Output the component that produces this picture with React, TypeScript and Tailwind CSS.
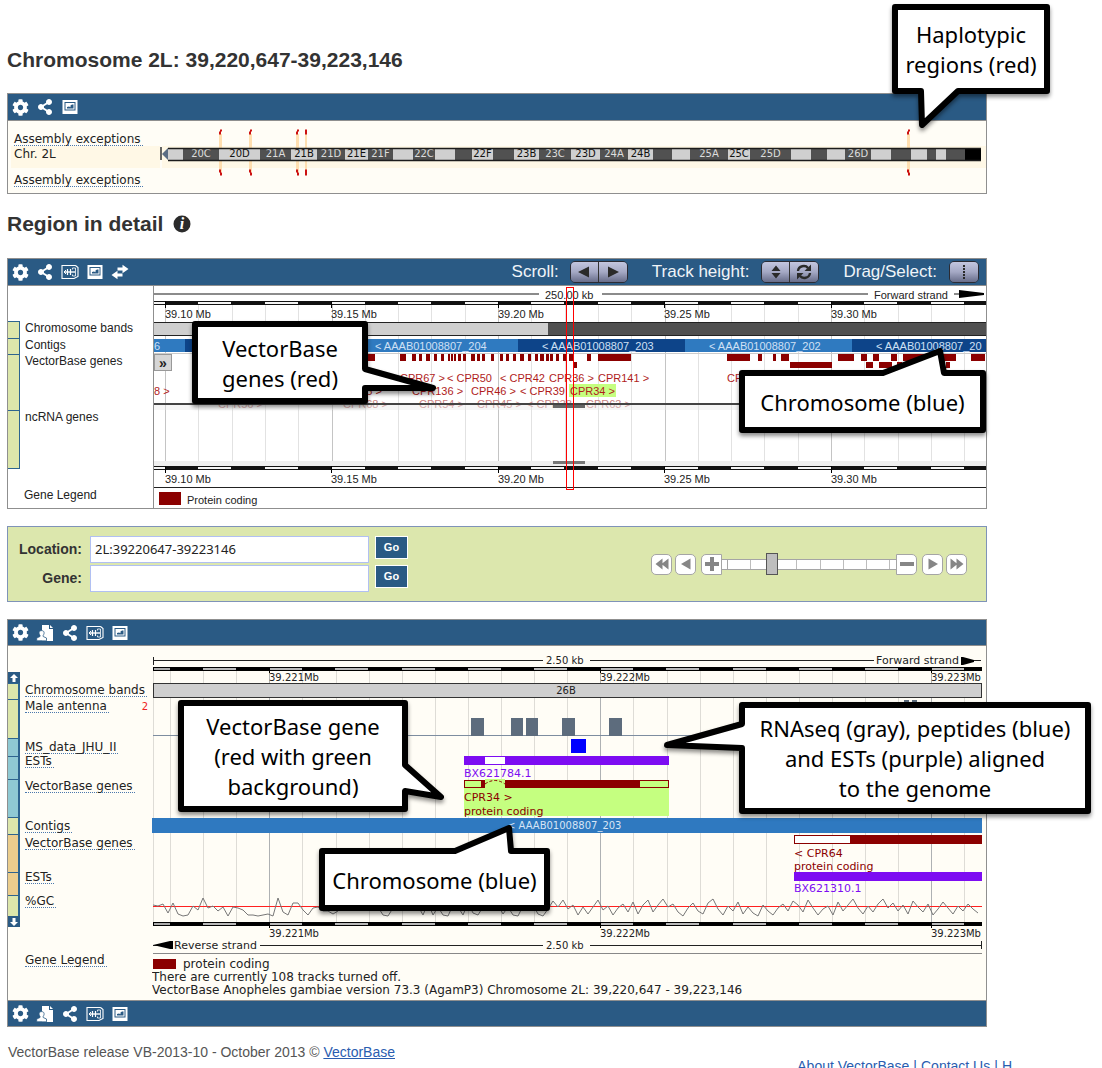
import React from "react";
import { FaCog, FaShareAlt } from "react-icons/fa";

const BLUE = "#2a5a84";
const RED = "#8b0000";
const SANS = '"Liberation Sans", Arial, sans-serif';
const DEJAVU = '"DejaVu Sans", Verdana, sans-serif';

/* ---------- toolbar icons ---------- */

function ImageIcon() {
  return (
    <svg viewBox="0 0 16 16" className="size-4">
      <rect x="0.5" y="1" width="15" height="14" fill="#fff" />
      <rect x="3" y="3.5" width="10" height="7.5" fill="none" stroke={BLUE} strokeWidth="1" />
      <path d="M5 9.500V8L7 7.500L8.500 8.200V6.500L10 5.500H11.500V9.500Z" fill={BLUE} />
    </svg>
  );
}

function ResizeIcon() {
  return (
    <svg viewBox="0 0 18 16" className="h-4 w-[18px]" fill="none" stroke="#fff">
      <path d="M14.5 1.500H1V14.500H13L17 12.500V3.500L14.500 1.500" strokeWidth="1.100" />
      <path d="M3 8H14" strokeWidth="1.400" />
      <path d="M6.500 5V11M9.500 5V11" strokeWidth="1.200" />
      <path d="M5 6L3 8L5 10" strokeWidth="1" />
      <path d="M11.500 5.500V4H14.500V12H11.500V10.500" strokeWidth="0.800" />
    </svg>
  );
}

function UserPageIcon() {
  return (
    <svg viewBox="0 0 18 18" className="size-[18px]">
      <path d="M6 1H13V5H17V17H6Z" fill="#fff" />
      <path d="M14 1L17 4H14Z" fill="#fff" />
      <path
        d="M0.7 16.8V14L4 12.5V11.2C2.6 9.8 2.6 6.6 5.6 6.6C8.6 6.6 8.6 9.8 7.2 11.2V12.5L10.5 14V16.8Z"
        fill="#fff"
        stroke={BLUE}
        strokeWidth="0.8"
      />
    </svg>
  );
}

function SwapIcon() {
  return (
    <svg viewBox="0 0 18 16" className="h-4 w-[18px]" fill="#fff">
      <path d="M17.5 5L11.5 0.8V3.4H6.5V6.6H11.5V9.2Z" />
      <path d="M0.5 11L6.5 6.8V9.4H11.5V12.6H6.5V15.2Z" />
    </svg>
  );
}

const TOOLS: Record<string, { label: string; icon: React.ReactNode }> = {
  gear: { label: "Configure", icon: <FaCog className="size-[17px]" /> },
  user: { label: "Your data", icon: <UserPageIcon /> },
  share: { label: "Share", icon: <FaShareAlt className="size-4" /> },
  resize: { label: "Resize image", icon: <ResizeIcon /> },
  image: { label: "Export image", icon: <ImageIcon /> },
  swap: { label: "Reset configuration", icon: <SwapIcon /> },
};

function Tools({ items }: { items: string[] }) {
  return (
    <div className="flex gap-[5px]">
      {items.map((k) => (
        <button key={k} aria-label={TOOLS[k].label} className="flex size-5 items-center justify-center text-white">
          {TOOLS[k].icon}
        </button>
      ))}
    </div>
  );
}

/* ---------- callouts ---------- */

function Callout({ box, path, lines }: { box: string; path: string; lines: string[] }) {
  return (
    <div className={"absolute " + box}>
      <svg className="absolute inset-0 size-full overflow-visible drop-shadow-[0_3px_2px_rgba(0,0,0,0.45)]">
        <path d={path} fill="#fff" stroke="#000" strokeWidth="6" strokeLinejoin="round" />
      </svg>
      <p className="relative flex h-full flex-col items-center justify-center whitespace-nowrap font-['Noto_Sans'] text-[22px] leading-[30px] text-black">
        {lines.map((l) => (
          <span key={l}>{l}</span>
        ))}
      </p>
    </div>
  );
}

/* ---------- overview chart ---------- */

type Band = [number, number, string?];
const LIGHT: Band[] = [
  [168, 183], [219, 260, "20D"], [291, 317, "21B"], [345, 368, "21E"], [393, 413], [435, 455],
  [472, 493, "22F"], [514, 539, "23B"], [571, 600, "23D"], [628, 653, "24B"], [672, 690],
  [728, 750, "25C"], [791, 811], [827, 845], [871, 891], [911, 927], [936, 946],
];
const DARK: Band[] = [
  [183, 219, "20C"], [260, 291, "21A"], [317, 345, "21D"], [368, 393, "21F"], [413, 435, "22C"],
  [455, 472], [493, 514], [539, 571, "23C"], [600, 628, "24A"], [653, 672], [690, 728, "25A"],
  [750, 791, "25D"], [811, 827], [845, 871, "26D"], [891, 911], [927, 936], [946, 965],
];
const EXCEPTIONS: [number, number][] = [[219, 3], [249, 3], [296, 3], [305, 2], [907, 3]];

function Bands({ bands, fill, ink }: { bands: Band[]; fill: string; ink: string }) {
  return (
    <>
      {bands.map(([a, b, t]) => (
        <g key={a}>
          <rect x={a} y={149} width={b - a} height={11} fill={fill} />
          {t && (
            <text x={(a + b) / 2} y={157} textAnchor="middle" fontSize="10" fill={ink}>
              {t}
            </text>
          )}
        </g>
      ))}
    </>
  );
}

function OverviewChart() {
  return (
    <svg viewBox="160 121 826 72" className="h-auto w-full" fontFamily={DEJAVU}>
      <rect x="162" y="146" width="824" height="22" fill="#fff8e6" />
      {EXCEPTIONS.map(([x, w]) => (
        <rect key={x} x={x} y="134" width={w} height="38" fill="#ffdfb0" />
      ))}
      <path d="M161 147V160" stroke="#333" strokeWidth="1.5" />
      <path d="M162 154L168 148V160Z" fill="#5b6d84" />
      <Bands bands={LIGHT} fill="#d0d0d0" ink="#111" />
      <Bands bands={DARK} fill="#515151" ink="#ddd" />
      <rect x="965" y="148" width="16" height="13" fill="#000" />
      <path d="M168 148.5H981M168 160.5H981" stroke="#1c1c1c" strokeWidth="1.5" />
      {EXCEPTIONS.map(([x, w]) => (
        <path
          key={x}
          d={`M${x} 131.5h2v3h-2zM${x + w - 2} 129.5h2v2h-2zM${x} 169.5h2v3h-2zM${x + w - 2} 172.5h2v3h-2z`}
          fill="#cc1111"
        />
      ))}
    </svg>
  );
}

/* ---------- region chart ---------- */

const GENES_ROW_1: [number, number][] = [
  [366, 9], [400, 6], [412, 4], [419, 3], [426, 4], [434, 3], [441, 3], [448, 2], [451, 2], [454, 2],
  [458, 3], [463, 3], [471, 4], [477, 3], [482, 3], [491, 3], [500, 3], [506, 3], [513, 3], [520, 4],
  [528, 3], [535, 3], [540, 4], [546, 3], [550, 3], [556, 3], [563, 3], [569, 4], [587, 4], [598, 33],
  [727, 23], [758, 4], [773, 3], [781, 8], [838, 16], [861, 6], [873, 6], [891, 6], [903, 53], [971, 14],
];
const GENES_ROW_2: [number, number][] = [[573, 4], [790, 42], [866, 7], [879, 13], [897, 5], [946, 4]];
const GENE_LABELS: [number, number, string][] = [
  [400, 382, "CPR67 >"], [447, 382, "< CPR50"], [500, 382, "< CPR42"], [549, 382, "CPR36 >"],
  [598, 382, "CPR141 >"], [727, 382, "CPR66 >"], [154, 395, "8 >"], [337, 395, "CPR65 >"],
  [412, 395, "CPR136 >"], [471, 395, "CPR46 >"], [520, 395, "< CPR39"], [570, 395, "CPR34 >"],
];
const FADED_LABELS: [number, string][] = [
  [218, "CPR56 >"], [343, "CPR68 >"], [419, "CPR54 >"], [477, "CPR45 >"], [527, "< CPR38"], [586, "CPR63 >"],
];
const MB: [number, string][] = [
  [165, "39.10 Mb"], [331, "39.15 Mb"], [498, "39.20 Mb"], [664, "39.25 Mb"], [831, "39.30 Mb"],
];
const range = (n: number) => Array.from({ length: n }, (_, i) => i);

function RegionRuler({ y, textY }: { y: number; textY: number }) {
  return (
    <g>
      <rect x="154" y={y} width="832" height="4" fill="#111" />
      {range(13).map((k) => (
        <rect key={k} x={Math.round(165 - 33.3 + 66.6 * k)} y={y + 1} width="33" height="2" fill="#f4f4f4" />
      ))}
      {MB.map(([x, t]) => (
        <g key={x}>
          <rect x={x} y={y} width="1" height="7" fill="#000" />
          <text x={x} y={textY} fontSize="11" fill="#222">
            {t}
          </text>
        </g>
      ))}
    </g>
  );
}

function RegionChart() {
  return (
    <svg viewBox="154 286 832 222" className="h-auto w-full" fontFamily={SANS}>
      {range(25).map((k) => (
        <rect
          key={k}
          x={Math.round(165 + 33.3 * k)}
          y="305"
          width="1"
          height="161"
          fill={k % 5 === 0 ? "#c4c4c4" : "#e2e2e2"}
        />
      ))}
      <path d="M154 294H539M602 294H868M954 294H962" stroke="#666" strokeWidth="1.5" />
      <path d="M959 290L984 293V295L959 298Z" fill="#000" />
      <text x="545" y="299" fontSize="11" fill="#222">250.00 kb</text>
      <text x="874" y="299" fontSize="11" fill="#222">Forward strand</text>
      <RegionRuler y={301} textY={318} />

      <rect x="154" y="322" width="394" height="14" fill="#cfcfcf" />
      <rect x="548" y="322" width="438" height="14" fill="#505050" />
      <path d="M154 322.5H986M154 335.5H986" stroke="#222" />

      <rect x="154" y="339" width="832" height="13" fill="#2f7ac0" />
      <rect x="185" y="339" width="166" height="13" fill="#0d4489" />
      <rect x="518" y="339" width="167" height="13" fill="#0d4489" />
      <rect x="852" y="339" width="134" height="13" fill="#0d4489" />
      <rect x="154" y="353" width="832" height="1" fill="#ccc" />
      <g fontSize="11" fill="#cfe0f5">
        <text x="154" y="350">6</text>
        <text x="375" y="350">&lt; AAAB01008807_204</text>
        <text x="542" y="350">&lt; AAAB01008807_203</text>
        <text x="709" y="350">&lt; AAAB01008807_202</text>
        <text x="876" y="350">&lt; AAAB01008807_20</text>
      </g>

      {GENES_ROW_1.map(([x, w]) => (
        <rect key={x} x={x} y="354" width={w} height="7" fill={RED} />
      ))}
      {GENES_ROW_2.map(([x, w]) => (
        <rect key={x} x={x} y="362" width={w} height="6" fill={RED} />
      ))}
      <rect x="569" y="384" width="47" height="13" fill="#c5ff80" />
      <g fontSize="11" fill="#b01c1c">
        {GENE_LABELS.map(([x, y, t]) => (
          <text key={t} x={x} y={y}>{t}</text>
        ))}
      </g>
      <g fontSize="11" fill="#c77f7f">
        {FADED_LABELS.map(([x, t]) => (
          <text key={t} x={x} y="408">{t}</text>
        ))}
      </g>
      <rect x="154" y="405" width="832" height="5" fill="#e8e8e8" fillOpacity="0.4" />
      <rect x="154" y="403" width="832" height="2" fill="#444" />
      <rect x="553" y="405" width="32" height="3" fill="#666" />
      <rect x="154" y="461" width="832" height="5" fill="#eeeeee" />
      <rect x="553" y="461" width="32" height="3" fill="#777" />
      <RegionRuler y={466} textY={483} />
      <rect x="154" y="487" width="832" height="1" fill="#222" />
      <rect x="159" y="492" width="22" height="13" fill={RED} />
      <text x="187" y="504" fontSize="11" fill="#222">Protein coding</text>
      <rect x="566.5" y="287.5" width="7" height="202" fill="none" stroke="#f00" />
    </svg>
  );
}

/* ---------- detail chart ---------- */

const KB: [number, string][] = [[269, "39.221Mb"], [600, "39.222Mb"], [931, "39.223Mb"]];

const GC = [
  905, 906, 904, 913, 903, 914, 916, 915, 906, 910, 898, 908, 906, 911, 907, 916, 907, 908, 910, 915, 915, 916, 915, 914,
  916, 898, 912, 915, 903, 903, 910, 915, 908, 907, 911, 911, 914, 911, 906, 911, 900, 909, 898, 902, 908, 907, 915, 916,
  908, 902, 903, 909, 899, 906, 915, 903, 915, 907, 915, 916, 905, 907, 915, 903, 913, 915, 907, 899, 910, 905, 914, 907,
  915, 916, 906, 911, 905, 914, 916, 909, 901, 907, 900, 909, 905, 915, 907, 914, 907, 900, 910, 906, 915, 908, 904, 912,
  902, 914, 905, 900, 912, 905, 899, 907, 904, 912, 916, 908, 903, 911, 914, 903, 899, 909, 915, 906, 911, 902, 914, 907,
  913, 916, 905, 911, 915, 908, 904, 911, 901, 905, 912, 900, 908, 915, 909, 906, 915, 902, 911, 905, 899, 908, 914, 906,
  912, 904, 899, 908, 903, 911, 905, 914, 901, 907, 912, 904, 915, 909, 902, 908, 914, 906, 911, 904, 909, 913,
];
const GC_POINTS = GC.map((y, i) => `${153 + i * 5},${y}`).join(" ");

function DetailRuler({ y, textY }: { y: number; textY: number }) {
  return (
    <g>
      <rect x="153" y={y} width="829" height="4" fill="#000" />
      <rect x="154" y={y + 1} width="16" height="2" fill="#aaa" />
      {range(12).map((k) => (
        <rect key={k} x={Math.round(203 + 66.2 * k)} y={y + 1} width="33" height="2" fill="#b9b9b9" />
      ))}
      {KB.map(([x, t]) => (
        <g key={x}>
          <rect x={x} y={y} width="1" height="6" fill="#000" />
          <text x={x} y={textY} fontSize="10" fill="#222">{t}</text>
        </g>
      ))}
    </g>
  );
}

function DetailChart() {
  return (
    <svg viewBox="152 646 834 354" className="h-auto w-full" fontFamily={DEJAVU}>
      <rect x="153" y="671" width="1" height="251" fill="#dedcd6" />
      {range(25).map((k) => (
        <rect
          key={k}
          x={Math.round(170 + 33.1 * k)}
          y="671"
          width="1"
          height="251"
          fill={k % 10 === 3 ? "#aeb1b3" : "#dedcd6"}
        />
      ))}
      <path d="M153.5 657V665M153 660.5H543M590 660.5H874M961 660.5H981" stroke="#222" strokeWidth="1" />
      <path d="M961 657H963L974 660V662L963 665H961Z" fill="#000" />
      <text x="546" y="664" fontSize="10" fill="#222">2.50 kb</text>
      <text x="876" y="664" fontSize="11" fill="#222">Forward strand</text>
      <DetailRuler y={667} textY={681} />

      <rect x="153.5" y="683.5" width="828" height="14" fill="#cfcfcf" stroke="#333" />
      <text x="566" y="694" fontSize="10" textAnchor="middle" fill="#222">26B</text>

      <rect x="153" y="735" width="829" height="1" fill="#7d8da0" />
      {[[471, 13], [511, 12], [526, 12], [562, 13], [609, 13]].map(([x, w]) => (
        <rect key={x} x={x} y="718" width={w} height="18" fill="#5d6c7d" />
      ))}
      <path d="M904 700h5v3h-5zM912 700h5v3h-5z" fill="#5d6c7d" />
      <rect x="571" y="739" width="15" height="14" fill="#0000ff" />

      <rect x="464" y="756" width="205" height="9" fill="#7d0cf2" />
      <rect x="485" y="757" width="20" height="7" fill="#fff" />
      <text x="464" y="777" fontSize="11" fill="#7d0cf2">BX621784.1</text>

      <rect x="464" y="780" width="205" height="36" fill="#c5ff80" />
      <rect x="464.5" y="780.5" width="204" height="7" fill="none" stroke={RED} />
      <rect x="485" y="779" width="20" height="10" fill="#c5ff80" />
      <path d="M485 784Q495 777 505 784" fill="none" stroke={RED} strokeDasharray="3 2" />
      <rect x="481" y="780" width="4" height="8" fill={RED} />
      <rect x="505" y="780" width="135" height="8" fill={RED} />
      <text x="464" y="801" fontSize="11" fill={RED}>CPR34 &gt;</text>
      <text x="464" y="815" fontSize="11" fill={RED}>protein coding</text>

      <rect x="152" y="818" width="830" height="15" fill="#2f79c0" />
      <text x="507" y="829" fontSize="10" fill="#d6e4f5">&lt; AAAB01008807_203</text>

      <rect x="794.5" y="835.5" width="187" height="8" fill="#fff" stroke={RED} />
      <rect x="850" y="835" width="132" height="9" fill={RED} />
      <text x="794" y="857" fontSize="11" fill={RED}>&lt; CPR64</text>
      <text x="794" y="870" fontSize="11" fill={RED}>protein coding</text>
      <rect x="794" y="872" width="188" height="9" fill="#7d0cf2" />
      <text x="794" y="892" fontSize="11" fill="#7d0cf2">BX621310.1</text>

      <rect x="153" y="906" width="829" height="1" fill="#ff2020" />
      <polyline points={GC_POINTS} fill="none" stroke="#777" strokeWidth="1" />
      <DetailRuler y={922} textY={937} />

      <path d="M153 945.5H160M260 945.5H543M590 945.5H981M981.5 941V949" stroke="#222" />
      <path d="M153 945L170 941H173V949H170Z" fill="#000" />
      <text x="174" y="949" fontSize="11" fill="#222">Reverse strand</text>
      <text x="546" y="949" fontSize="10" fill="#222">2.50 kb</text>
      <rect x="153" y="953" width="829" height="1" fill="#888" />

      <rect x="153" y="959" width="23" height="10" fill={RED} />
      <g fontSize="12" fill="#222">
        <text x="183" y="968">protein coding</text>
        <text x="152" y="981">There are currently 108 tracks turned off.</text>
        <text x="152" y="994">
          VectorBase Anopheles gambiae version 73.3 (AgamP3) Chromosome 2L: 39,220,647 - 39,223,146
        </text>
      </g>
    </svg>
  );
}

/* ---------- track labels ---------- */

const DETAIL_TRACKS = [
  { name: "Chromosome bands", row: "h-4 bg-[#dce6ab]", pad: "pt-0.5" },
  { name: "Male antenna", row: "h-[39px] bg-[#dce6ab]", pad: "pt-0.5", note: "2" },
  { name: "MS_data_JHU_II", row: "h-[18px] bg-[#8fc9d3]", pad: "pt-1" },
  { name: "ESTs", row: "h-[23px] bg-[#8fc9d3]", pad: "pt-0" },
  { name: "VectorBase genes", row: "h-[38px] bg-[#8fc9d3]", pad: "pt-0.5" },
  { name: "Contigs", row: "h-[17px] bg-[#dce6ab]", pad: "pt-1" },
  { name: "VectorBase genes", row: "h-[38px] bg-[#ebcd8d]", pad: "pt-1" },
  { name: "ESTs", row: "h-[23px] bg-[#ebcd8d]", pad: "pt-0" },
  { name: "%GC", row: "h-[21px] bg-[#dce6ab]", pad: "pt-px" },
];

const REGION_TRACKS = [
  { name: "Chromosome bands", row: "h-[17px]" },
  { name: "Contigs", row: "h-4" },
  { name: "VectorBase genes", row: "h-14" },
  { name: "ncRNA genes", row: "h-[58px]" },
];

function TrackName({ children }: { children: string }) {
  return (
    <a
      href="#track"
      className="block w-fit whitespace-nowrap border-b border-dotted border-[#4b78ad] pr-0.5 font-['DejaVu_Sans'] text-[12px] leading-[11px] text-[#222]"
    >
      {children}
    </a>
  );
}

function ArrowCell({ down }: { down?: boolean }) {
  return (
    <button
      aria-label={down ? "Scroll tracks down" : "Scroll tracks up"}
      className="flex h-[11px] w-3 items-center justify-center bg-[#2a5a84]"
    >
      <svg viewBox="0 0 8 8" className="size-2" fill="#fff">
        {down ? <path d="M4 8L0 4H2.5V0H5.5V4H8Z" /> : <path d="M4 0L0 4H2.5V8H5.5V4H8Z" />}
      </svg>
    </button>
  );
}

/* ---------- buttons ---------- */

const CHROME_BUTTON =
  "flex h-full w-7 items-center justify-center bg-linear-to-b from-[#c3c6df] via-[#a4a8c4] to-[#686d8a]";

function ButtonGroup({ items }: { items: { label: string; icon: React.ReactNode }[] }) {
  return (
    <div className="flex h-[22px] divide-x divide-[#333] overflow-hidden rounded-[5px] border border-[#2b2b33]">
      {items.map((b) => (
        <button key={b.label} aria-label={b.label} className={CHROME_BUTTON}>
          {b.icon}
        </button>
      ))}
    </div>
  );
}

const ico = (d: string) => (
  <svg viewBox="0 0 16 16" className="size-4" fill="#2a2a2a">
    <path d={d} />
  </svg>
);

const REFRESH = (
  <svg viewBox="0 0 16 16" className="size-4">
    <path d="M2 7C2.5 1.5 9.5 0.8 12 4M14 9C13.5 14.5 6.500 15.200 4 12" fill="none" stroke="#2a2a2a" strokeWidth="2.400" />
    <path d="M15 0.500V7H8.500ZM1 15.500V9H7.500Z" fill="#2a2a2a" />
  </svg>
);

function NavButton({ label, d, shape }: { label: string; d: string; shape: string }) {
  return (
    <button
      aria-label={label}
      className={"flex size-[21px] items-center justify-center border border-[#a5a5a5] bg-white " + shape}
    >
      <svg viewBox="0 0 16 16" className="size-4" fill="#868686">
        <path d={d} />
      </svg>
    </button>
  );
}

function ZoomSlider() {
  return (
    <div className="flex items-center">
      <NavButton label="Far left" d="M8.500 2.500V13.500L1.500 8ZM14.500 2.500V13.500L7.500 8Z" shape="mr-[3px] rounded-[5px]" />
      <NavButton label="Left" d="M12.500 2.500V13.500L3 8Z" shape="mr-[5px] rounded-[5px]" />
      <NavButton label="Zoom in" d="M6 1H10V6H15V10H10V15H6V10H1V6H6Z" shape="rounded-l-[5px]" />
      <div className="relative flex h-[11px] w-[174px] border-y border-[#a5a5a5] bg-white">
        <i className="w-1.5 border-r border-[#a5a5a5]" />
        {range(7).map((k) => (
          <i key={k} className="flex-1 border-r border-[#bdbdbd]" />
        ))}
        <i className="w-1.5" />
        <input
          type="range"
          aria-label="Zoom"
          min={0}
          max={100}
          defaultValue={27}
          className="absolute inset-x-0 -top-1.5 h-[21px] w-full appearance-none bg-transparent [&::-webkit-slider-thumb]:h-[22px] [&::-webkit-slider-thumb]:w-3 [&::-webkit-slider-thumb]:appearance-none [&::-webkit-slider-thumb]:border [&::-webkit-slider-thumb]:border-[#555] [&::-webkit-slider-thumb]:bg-[#bebebe]"
        />
      </div>
      <NavButton label="Zoom out" d="M1 6H15V10H1Z" shape="mr-[5px] rounded-r-[5px]" />
      <NavButton label="Right" d="M3.500 2.500V13.500L13 8Z" shape="mr-[3px] rounded-[5px]" />
      <NavButton label="Far right" d="M1.500 2.500V13.500L8.500 8ZM7.500 2.500V13.500L14.500 8Z" shape="rounded-[5px]" />
    </div>
  );
}

function Field({ id, label, value }: { id: string; label: string; value: string }) {
  return (
    <div className="flex items-start">
      <label htmlFor={id} className="w-[74px] text-right text-[14px] font-bold leading-[27px] text-[#333]">
        {label}
      </label>
      <input
        id={id}
        defaultValue={value}
        className="ml-2 h-[27px] w-[279px] border border-[#b1c0f2] bg-white px-1 pb-0.5 font-['Noto_Sans'] text-[13px] text-[#222] outline-none"
      />
      <button className="ml-1.5 h-[23px] w-[33px] border border-white bg-[#2a5a84] text-[11px] font-bold leading-none text-white">
        Go
      </button>
    </div>
  );
}

/* ---------- page ---------- */

export default function App() {
  return (
    <div className="relative overflow-hidden bg-white pt-[46px] font-['Liberation_Sans'] text-[#333]">
      <main className="ml-[7px] mr-[115px]">
        <h1 className="text-[21px] font-bold leading-7">Chromosome 2L: 39,220,647-39,223,146</h1>

        <section className="mt-[19px] border border-[#8f8f8f] bg-[#fffdf6]">
          <header className="flex h-[27px] items-center border-b border-[#8f8f8f] bg-[#2a5a84] px-0.5">
            <Tools items={["gear", "share", "image"]} />
          </header>
          <div className="flex">
            <div className="w-[152px] shrink-0 pt-[13px]">
              <div className="h-3 pl-1.5">
                <TrackName>Assembly exceptions</TrackName>
              </div>
              <div className="ml-[3px] h-[22px] bg-[#fff8e6] pl-[3px] font-['DejaVu_Sans'] text-[12px] leading-4 text-[#222]">
                Chr. 2L
              </div>
              <div className="pl-1.5 pt-[7px]">
                <TrackName>Assembly exceptions</TrackName>
              </div>
            </div>
            <div className="min-w-0 flex-1">
              <OverviewChart />
            </div>
          </div>
        </section>

        <h2 className="mt-4 flex items-center gap-2.5 text-[21px] font-bold leading-7">
          Region in detail
          <svg viewBox="0 0 18 18" className="size-[18px]" role="img" aria-label="Information">
            <circle cx="9" cy="9" r="8.500" fill="#2b2b2b" />
            <text x="9" y="14" textAnchor="middle" fontFamily="Liberation Serif, serif" fontSize="16" fontWeight="bold" fontStyle="italic" fill="#fff">
              i
            </text>
          </svg>
        </h2>

        <section className="mt-5 border border-[#8f8f8f] bg-white">
          <header className="flex h-[27px] items-center border-b border-[#8f8f8f] bg-[#2a5a84] pl-0.5 pr-[7px] text-[17px] text-[#f0f4f8]">
            <Tools items={["gear", "share", "resize", "image", "swap"]} />
            <div className="ml-auto flex items-center">
              <span className="mr-[11px]">Scroll:</span>
              <ButtonGroup
                items={[
                  { label: "Scroll left", icon: ico("M13 2.500V13.500L2 8Z") },
                  { label: "Scroll right", icon: ico("M3 2.500V13.500L14 8Z") },
                ]}
              />
              <span className="ml-6 mr-3">Track height:</span>
              <ButtonGroup
                items={[
                  { label: "Fixed track height", icon: ico("M8 1.500L12.500 7H3.500ZM8 14.500L12.500 9H3.500Z") },
                  { label: "Auto track height", icon: REFRESH },
                ]}
              />
              <span className="ml-6 mr-3">Drag/Select:</span>
              <ButtonGroup
                items={[
                  {
                    label: "Toggle drag or select",
                    icon: ico("M7 1h2v2h-2zM7 4h2v2h-2zM7 7h2v2h-2zM7 10h2v2h-2zM7 13h2v2h-2z"),
                  },
                ]}
              />
            </div>
          </header>
          <div className="flex">
            <div className="w-[146px] shrink-0 border-r border-[#8f8f8f] pt-[35px] text-[12px] text-[#222]">
              {REGION_TRACKS.map((t) => (
                <div key={t.name} className={"flex " + t.row}>
                  <div className="w-3 shrink-0 border-r border-t border-[#2d648f] bg-[#dce6ab]" />
                  <span className="pl-[5px] leading-[15px]">{t.name}</span>
                </div>
              ))}
              <div className="w-3 border-t border-[#2d648f]" />
              <div className="pl-4 pt-[18px] leading-4">Gene Legend</div>
            </div>
            <div className="relative min-w-0 flex-1">
              <RegionChart />
              <button
                aria-label="Expand track"
                className="absolute left-0 top-[68px] h-[17px] w-[18px] border border-[#999] bg-[#d6d6d6] text-[14px] font-bold leading-none text-[#222]"
              >
                »
              </button>
            </div>
          </div>
        </section>

        <form className="mt-[17px] flex h-[76px] items-center justify-between border border-[#7f93b8] bg-[#dce7ad] pr-[19px]">
          <div className="flex flex-col gap-[2px]">
            <Field id="location" label="Location:" value="2L:39220647-39223146" />
            <Field id="gene" label="Gene:" value="" />
          </div>
          <ZoomSlider />
        </form>

        <section className="mt-[17px] border border-[#8f8f8f] bg-[#fffdf6]">
          <header className="flex h-[26px] items-center border-b border-[#8f8f8f] bg-[#2a5a84] px-0.5">
            <Tools items={["gear", "user", "share", "resize", "image"]} />
          </header>
          <div className="flex">
            <div className="w-36 shrink-0 pt-[26px]">
              <ArrowCell />
              {DETAIL_TRACKS.map((t, i) => (
                <div key={i} className="flex">
                  <div className={"w-3 shrink-0 border-r-2 border-t border-[#2d648f] " + t.row} />
                  <div className={"h-0 pl-[5px] " + t.pad}>
                    <TrackName>{t.name}</TrackName>
                  </div>
                  {t.note && (
                    <span className="ml-auto pr-1 pt-0.5 font-['DejaVu_Sans'] text-[10px] leading-3 text-[#e22]">
                      {t.note}
                    </span>
                  )}
                </div>
              ))}
              <ArrowCell down />
              <div className="pl-[17px] pt-7">
                <TrackName>Gene Legend</TrackName>
              </div>
            </div>
            <div className="min-w-0 flex-1">
              <DetailChart />
            </div>
          </div>
          <footer className="flex h-[26px] items-center border-t border-[#8f8f8f] bg-[#2a5a84] px-0.5">
            <Tools items={["gear", "user", "share", "resize", "image"]} />
          </footer>
        </section>

        <p className="mt-[17px] pl-px text-[14px] leading-4 text-[#555]">
          VectorBase release VB-2013-10 - October 2013 ©{" "}
          <a href="#vectorbase" className="text-[#2a5db0] underline">
            VectorBase
          </a>
        </p>
      </main>
      <nav className="mr-[90px] flex h-2 justify-end gap-1 overflow-hidden whitespace-nowrap text-[14px] leading-3 text-[#2a5db0]">
        <a href="#about">About VectorBase</a>
        <span>|</span>
        <a href="#contact">Contact Us</a>
        <span>|</span>
        <a href="#help">H</a>
      </nav>

      <Callout
        box="left-[892px] top-1 h-[90px] w-[158px]"
        path="M3 3H155V87H66L30 121L29 87H3Z"
        lines={["Haplotypic", "regions (red)"]}
      />
      <Callout
        box="left-[192px] top-[321px] h-[83px] w-[176px]"
        path="M3 3H173V48L241 67L173 67V80H3Z"
        lines={["VectorBase", "genes (red)"]}
      />
      <Callout
        box="left-[739px] top-[370px] h-[63px] w-[247px]"
        path="M3 3H144L201 -19L205 3H244V60H3Z"
        lines={["Chromosome (blue)"]}
      />
      <Callout
        box="left-[178px] top-[700px] h-[112px] w-[230px]"
        path="M3 3H227V65L263 97L227 91V109H3Z"
        lines={["VectorBase gene", "(red with green", "background)"]}
      />
      <Callout
        box="left-[739px] top-[702px] h-[112px] w-[352px]"
        path="M3 3H349V109H3V46L-72 43L3 22Z"
        lines={["RNAseq (gray), peptides (blue)", "and ESTs (purple) aligned", "to the genome"]}
      />
      <Callout
        box="left-[319px] top-[848px] h-[63px] w-[231px]"
        path="M3 3H136L190 -20L192 3H228V60H3Z"
        lines={["Chromosome (blue)"]}
      />
    </div>
  );
}
